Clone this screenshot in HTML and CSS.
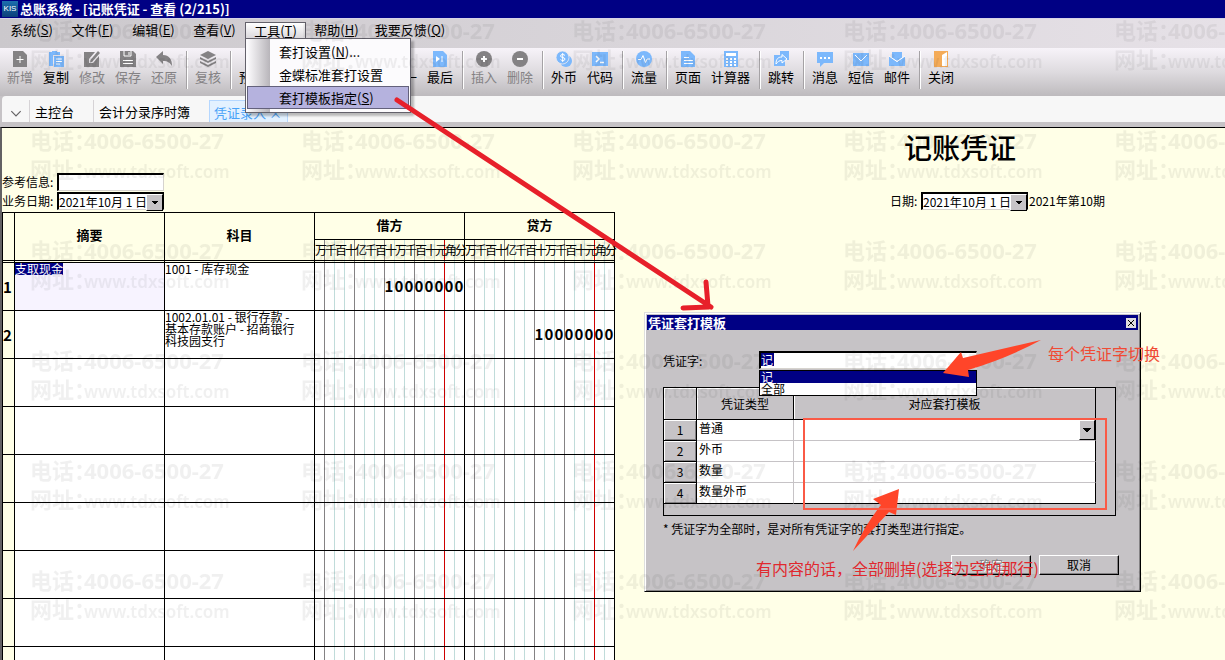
FILE: index.html
```html
<!DOCTYPE html>
<html lang="zh-CN">
<head>
    <meta charset="UTF-8">
    <meta name="viewport" content="width=device-width, initial-scale=1.0">
    <title>总账系统 - [记账凭证 - 查看 (2/215)]</title>
    <link rel="stylesheet" href="styles.css">
</head>
<body>
<div class="app">

    <header class="titlebar">
        <span class="logo">KIS</span>
        <h1>总账系统 - [记账凭证 - 查看 (2/215)]</h1>
    </header>

    <!-- Menu -->
    <nav class="menubar">
        <button>系统(<u>S</u>)</button>
        <button>文件(<u>F</u>)</button>
        <button>编辑(<u>E</u>)</button>
        <button>查看(<u>V</u>)</button>
        <div class="menu-open">
            <button class="active">工具(<u>T</u>)</button>
            <div class="menu-popup">
                <button>套打设置(<u>N</u>)...</button>
                <button>金蝶标准套打设置</button>
                <button class="selected">套打模板指定(<u>S</u>)</button>
            </div>
        </div>
        <button>帮助(<u>H</u>)</button>
        <button class="wide">我要反馈(<u>Q</u>)</button>
    </nav>

    <!-- Toolbar -->
    <div class="toolbar">
        <button class="off"><svg viewBox="0 0 16 16"><path d="M1 0h10l4 4v12H1z"/><path class="w" d="M8 5v7M4.500 8.500h7"/></svg>新增</button>
        <button><svg viewBox="0 0 16 16"><path d="M1 1h3V0h5v1h3v3H5v11H1z"/><path d="M6 5h10v11H6z"/><path class="w" d="M8 8h6M8 10.500h6M8 13h4"/></svg>复制</button>
        <button class="off"><svg viewBox="0 0 16 16"><path d="M0 1h11L5 8v4h4l6-7v11H0z"/><path d="M14 0l2 2-8 9-2 .5.5-2.500z"/></svg>修改</button>
        <button class="off"><svg viewBox="0 0 16 16"><path d="M0 0h13l3 3v13H0z"/><path class="w" d="M4 0v5h7V0M9 1v3M3 9.500h10M3 12.500h10"/></svg>保存</button>
        <button class="off"><svg viewBox="0 0 16 16"><path d="M0 6l7-6v4c6 0 9 4 9 11-2-3-4-5-9-5v3z"/></svg>还原</button>
        <hr>
        <button class="off"><svg viewBox="0 0 16 16"><path d="M8 0l8 4-8 4-8-4z"/><path d="M0 6l8 4 8-4v2l-8 4-8-4z"/><path d="M0 10l8 4 8-4v2l-8 4-8-4z"/></svg>复核</button>
        <hr>
        <button><svg viewBox="0 0 16 16"><path d="M1 0h14v16H1z"/></svg>预览</button>
        <button aria-label="打印"><svg viewBox="0 0 16 16"><path d="M0 4h16v8H0z"/></svg></button>
        <hr>
        <button aria-label="第一"><svg viewBox="0 0 16 16"><path d="M1 0h10l4 4v12H1z"/></svg></button>
        <button aria-label="上一"><svg viewBox="0 0 16 16"><path d="M1 0h10l4 4v12H1z"/></svg></button>
        <button><svg viewBox="0 0 16 16"><path d="M1 0h10l4 4v12H1z"/></svg>下一</button>
        <button><svg viewBox="0 0 16 16"><path d="M1 0h10l4 4v12H1z"/><path fill="#fff" stroke="none" d="M4 5l4 3-4 3z"/><path class="w" d="M10 5v6"/></svg>最后</button>
        <hr>
        <button class="off"><svg viewBox="0 0 16 16"><circle cx="8" cy="8" r="8"/><path class="w b" d="M8 5v6M5 8h6"/></svg>插入</button>
        <button class="off"><svg viewBox="0 0 16 16"><circle cx="8" cy="8" r="8"/><path class="w b" d="M5 8h6"/></svg>删除</button>
        <hr>
        <button><svg viewBox="0 0 16 16"><circle cx="10" cy="10" r="6"/><circle cx="6.500" cy="6.500" r="6.500" stroke="#eeebef" stroke-width=".8"/><path class="w" d="M9 4.500C8 3 4.500 3 4.500 5s4.500 1 4.500 3-3.500 2-4.500.5M6.700 2v9"/></svg>外币</button>
        <button><svg viewBox="0 0 16 16"><path d="M0 1h16v14H0z"/><path class="w" stroke-width="1.500" d="M4 5l3 3-3 3M8 11.500h4"/></svg>代码</button>
        <hr>
        <button><svg viewBox="0 0 16 16"><circle cx="8" cy="8" r="8"/><path class="w" d="M2 8.500h3l2-4 2.500 7L11 8h3"/></svg>流量</button>
        <hr>
        <button><svg viewBox="0 0 16 16"><path d="M1 0h9l5 5v11H1z"/><path class="w" d="M4 6.500h5M4 9.500h9M4 12.500h9"/></svg>页面</button>
        <button class="wide"><svg viewBox="0 0 16 16"><path d="M1 0h14v16H1z"/><path fill="#fff" d="M3 2h10v3H3z"/><path class="w b" stroke-dasharray="2 2" d="M3 8h10M3 11h10M3 14h10"/></svg>计算器</button>
        <hr>
        <button><svg viewBox="0 0 16 16"><path d="M1 4h11v11H1zM7 0h9v9H7z"/><path fill="#7cb8fc" stroke="#fff" d="M3 13c0-5 2-7 6-7V3.500L14 8l-5 4V9.500c-3 0-4 1-6 3.500z"/></svg>跳转</button>
        <hr>
        <button><svg viewBox="0 0 16 16"><path d="M0 1h16v11H7l-4 4v-4H0z"/><path class="w b" stroke-dasharray="2 2" d="M3 7h10"/></svg>消息</button>
        <button><svg viewBox="0 0 16 16"><path d="M0 2h16v13H0z"/><path class="w" d="M2 4l6 6 6-6"/></svg>短信</button>
        <button><svg viewBox="0 0 16 16"><path d="M3 1h10v6l-5 3-5-3z"/><path d="M0 5l8 6 8-6v10H0z"/><path class="w" d="M0 5l8 5.500L16 5"/></svg>邮件</button>
        <hr>
        <button><svg viewBox="0 0 16 16"><path fill="#f4ab58" d="M1 0h14v16H1z"/><path fill="#fff" d="M9 4l5-3v14H9z"/></svg>关闭</button>
    </div>

    <!-- Tabs -->
    <div class="tabs">
        <button class="tab-list" aria-label="窗口列表"><svg viewBox="0 0 10 6"><path d="M1 1l4 4 4-4"/></svg></button>
        <a href="#">主控台</a>
        <a href="#">会计分录序时簿</a>
        <a href="#" class="current">凭证录入 ×</a>
    </div>

    <!-- Voucher -->
    <main class="voucher">
        <h2>记账凭证</h2>
        <div class="fields">
            <div class="left-fields">
                <label for="ref">参考信息:</label>
                <input type="text" id="ref" class="sunken">
                <label for="bizDate">业务日期:</label>
                <span class="drop"><select id="bizDate" class="sunken"><option>2021年10月 1 日</option></select></span>
            </div>
            <div class="right-fields">
                <label for="date">日期:</label>
                <span class="drop"><select id="date" class="sunken"><option>2021年10月 1 日</option></select></span>
                <span>2021年第10期</span>
            </div>
        </div>

        <table class="ledger">
            <colgroup>
                <col class="c-num"><col class="c-text"><col class="c-text"><col class="c-text"><col class="c-text">
            </colgroup>
            <thead>
                <tr>
                    <th rowspan="2" class="last"></th>
                    <th rowspan="2" class="last">摘要</th>
                    <th rowspan="2" class="last">科目</th>
                    <th>借方</th>
                    <th>贷方</th>
                </tr>
                <tr>
                    <td class="money last"><div class="units"><span>万</span><span>千</span><span>百</span><span>十</span><span>亿</span><span>千</span><span>百</span><span>十</span><span>万</span><span>千</span><span>百</span><span>十</span><span>元</span><span>角</span><span>分</span></div></td>
                    <td class="money last"><div class="units"><span>万</span><span>千</span><span>百</span><span>十</span><span>亿</span><span>千</span><span>百</span><span>十</span><span>万</span><span>千</span><span>百</span><span>十</span><span>元</span><span>角</span><span>分</span></div></td>
                </tr>
            </thead>
            <tbody>
                <tr>
                    <th>1</th>
                    <td class="editing"><mark>支取现金</mark></td>
                    <td>1001 - 库存现金</td>
                    <td class="money"><div class="amount"><span>1</span><span>0</span><span>0</span><span>0</span><span>0</span><span>0</span><span>0</span><span>0</span></div></td>
                    <td class="money"></td>
                </tr>
                <tr>
                    <th>2</th>
                    <td></td>
                    <td>1002.01.01 - 银行存款 -<br>基本存款账户 - 招商银行<br>科技园支行</td>
                    <td class="money"></td>
                    <td class="money"><div class="amount"><span>1</span><span>0</span><span>0</span><span>0</span><span>0</span><span>0</span><span>0</span><span>0</span></div></td>
                </tr>
                <tr><th></th><td></td><td></td><td class="money"></td><td class="money"></td></tr>
                <tr><th></th><td></td><td></td><td class="money"></td><td class="money"></td></tr>
                <tr><th></th><td></td><td></td><td class="money"></td><td class="money"></td></tr>
                <tr><th></th><td></td><td></td><td class="money"></td><td class="money"></td></tr>
                <tr><th></th><td></td><td></td><td class="money"></td><td class="money"></td></tr>
                <tr><th></th><td></td><td></td><td class="money"></td><td class="money"></td></tr>
                <tr><th></th><td></td><td></td><td class="money"></td><td class="money"></td></tr>
            </tbody>
        </table>
    </main>

    <!-- Template dialog -->
    <section class="dialog">
        <header>
            <h3>凭证套打模板</h3>
            <button class="close" aria-label="关闭"><svg viewBox="0 0 8 8"><path d="M1 1l6 6M7 1L1 7"/></svg></button>
        </header>
        <div class="dialog-body">
            <div class="word-row">
                <label for="word">凭证字:</label>
                <div class="combo">
                    <div class="combo-box sunken"><input type="text" id="word" value="记"></div>
                    <ul>
                        <li class="selected">记</li>
                        <li>全部</li>
                    </ul>
                </div>
            </div>
            <div class="grid-box">
                <table class="templates">
                    <colgroup><col class="t-num"><col class="t-type"><col></colgroup>
                    <thead>
                        <tr><th></th><th>凭证类型</th><th>对应套打模板</th></tr>
                    </thead>
                    <tbody>
                        <tr><th>1</th><td>普通</td><td class="pick"><button class="arrow" aria-label="选择模板"></button></td></tr>
                        <tr><th>2</th><td>外币</td><td></td></tr>
                        <tr><th>3</th><td>数量</td><td></td></tr>
                        <tr><th>4</th><td>数量外币</td><td></td></tr>
                    </tbody>
                </table>
            </div>
            <p>* 凭证字为全部时，是对所有凭证字的套打类型进行指定。</p>
            <div class="actions">
                <button disabled>确定</button>
                <button>取消</button>
            </div>
        </div>
    </section>

    <!-- Watermark -->
    <svg class="overlay watermark">
        <defs>
            <pattern id="mark" width="271" height="110" patternUnits="userSpaceOnUse">
                <text x="30" y="39">电话：</text>
                <text x="84" y="39">4006-6500-27</text>
                <text x="30" y="68">网址：</text>
                <text x="84" y="68" class="site">www.tdxsoft.com</text>
            </pattern>
        </defs>
        <rect y="20" width="100%" height="100%" fill="url(#mark)"/>
    </svg>

    <!-- Notes -->
    <svg class="overlay notes">
        <path class="pen" d="M397 100L711 307M706 282l2 24M683 308l26-1"/>
        <path class="head" d="M1041 340L963 358l-2-6-18 21 26 4-1-7q40-12 73-30z"/>
        <path class="head" d="M899 489l-26 10 8 6q-16 20-28 46l36-39 7 3z"/>
        <rect x="804" y="419" width="302" height="90"/>
    </svg>
    <div class="note note-word">每个凭证字切换</div>
    <div class="note note-clear">有内容的话，全部删掉(选择为空的那行)</div>
</div>
</body>
</html>
```

FILE: styles.css
```css
* {
    box-sizing: border-box;
}
body {
    margin: 0;
    font-family: "Noto Sans CJK SC", sans-serif;
    font-size: 12px;
    color: #000;
}
button, input, select {
    font: inherit;
    color: inherit;
    margin: 0;
    padding: 0;
    border: none;
    border-radius: 0;
    background: none;
}
h1, h2, h3, p, ul {
    margin: 0;
    padding: 0;
}
.app {
    position: relative;
    display: flex;
    flex-direction: column;
    height: 100vh;
    overflow: hidden;
    background: #c6c3c6;
}

/* title bar */
.titlebar {
    display: flex;
    align-items: center;
    gap: 2px;
    height: 18px;
    padding-left: 2px;
    background: #000084;
    color: #fff;
}
.titlebar h1 {
    font-size: 13px;
    line-height: 18px;
}
.logo {
    width: 16px;
    height: 16px;
    background: linear-gradient(#1c6fae, #0b3f7a);
    font: 8px/16px "Liberation Sans", sans-serif;
    text-align: center;
}

/* menu */
.menubar {
    display: flex;
    height: 30px;
    padding: 2px 0 0 1px;
    border-top: 1px solid #d6d3e8;
    background: linear-gradient(90deg, #cbc8cc, #e6e1e7);
    font-size: 13px;
}
.menubar button {
    width: 61px;
    height: 18px;
    line-height: 16px;
    white-space: nowrap;
}
.menubar .wide {
    width: 86px;
}
.menu-open {
    position: relative;
    height: 18px;
}
.menubar .active {
    border: 1px solid #63616b;
    border-bottom: none;
    background: linear-gradient(#fff, #d6d3d8);
}
.menu-popup {
    position: absolute;
    z-index: 5;
    top: 17px;
    left: 0;
    width: 166px;
    padding: 1px 1px 3px;
    border: 1px solid #63616b;
    background: linear-gradient(90deg, #fdfcfe, #b8b5ba) 1px 0 / 23px 100% no-repeat #fcfbfd;
    box-shadow: 3px 3px 2px rgba(0, 0, 0, 0.25);
}
.menu-popup button {
    display: block;
    width: 100%;
    height: 23px;
    padding-left: 32px;
    line-height: 22px;
    text-align: left;
}
.menu-popup .selected {
    padding-left: 31px;
    border: 1px solid #63617b;
    background: #b5b2de;
    line-height: 20px;
}

/* toolbar */
.toolbar {
    display: flex;
    height: 48px;
    padding: 3px 0 0 2px;
    background: linear-gradient(#f7f3f9, #dedbdf 50%, #bdbabd);
    font-size: 13px;
}
.toolbar button {
    width: 36px;
    height: 38px;
    display: flex;
    flex-direction: column;
    align-items: center;
    gap: 1px;
    line-height: 18px;
    white-space: nowrap;
}
.toolbar .wide {
    width: 49px;
}
.toolbar .off {
    color: #848284;
}
.toolbar hr {
    width: 2px;
    height: 38px;
    margin: 0 2px 0 4px;
    border: none;
    border-left: 1px solid #a5a2a5;
    border-right: 1px solid #fff;
}
.toolbar svg {
    width: 16px;
    height: 16px;
    fill: #7cb8fc;
}
.toolbar .off svg {
    fill: #848284;
}
.toolbar .w {
    fill: none;
    stroke: #fff;
}
.toolbar .b {
    stroke-width: 2;
}

/* tabs */
.tabs {
    display: flex;
    align-items: flex-end;
    height: 26px;
    margin-left: 2px;
    border-top-left-radius: 4px;
    background: #f7f7f7;
    font-size: 13px;
}
.tab-list {
    width: 27px;
    height: 22px;
}
.tab-list svg {
    width: 12px;
    height: 7px;
    fill: none;
    stroke: #636163;
}
.tabs a {
    height: 22px;
    padding: 0 19px 0 5px;
    border-left: 1px solid #d6d3d6;
    color: #000;
    line-height: 24px;
    text-decoration: none;
}
.tabs .current {
    padding: 0 5px 0 4px;
    border: 1px solid #b5d7ff;
    border-bottom: none;
    background: #e3f1ff;
    color: #4aa2f7;
}

/* voucher */
.voucher {
    flex: 1;
    min-height: 0;
    margin-top: 5px;
    overflow: hidden;
    border-top: 1px solid #000;
    border-left: 2px solid #636163;
    background: #ffffe7;
}
.voucher h2 {
    height: 45px;
    padding-left: 902px;
    font-size: 28px;
    font-weight: 500;
    line-height: 38px;
    white-space: nowrap;
}
.fields {
    display: flex;
    align-items: flex-end;
    height: 39px;
    padding-bottom: 2px;
    white-space: nowrap;
}
.left-fields {
    display: grid;
    grid-template-columns: 55px 107px;
    row-gap: 1px;
    width: 888px;
    line-height: 18px;
}
.right-fields {
    display: grid;
    grid-template-columns: 30px 107px auto;
    column-gap: 1px;
    line-height: 18px;
}
.sunken {
    width: 100%;
    height: 18px;
    border: 1px solid #d6d3ce;
    border-top: 2px solid #000;
    border-left: 2px solid #000;
    background: #fff;
}
.drop {
    position: relative;
    display: block;
    height: 18px;
}
.drop select {
    display: block;
    appearance: none;
    border-right: 1px solid #000;
    line-height: 14px;
}
.drop::after {
    content: "";
    position: absolute;
    top: 2px;
    right: 1px;
    width: 15px;
    height: 15px;
    border: 1px solid #fff;
    border-right-color: #000;
    border-bottom-color: #000;
    background: conic-gradient(from 315deg at 50% 100%, #000 90deg, transparent 0) center / 6px 3px no-repeat #c6c3c6;
    pointer-events: none;
}

/* ledger */
.ledger {
    width: 613px;
    table-layout: fixed;
    border-collapse: separate;
    border-spacing: 0;
    border: 1px solid #000;
    border-width: 1px 0 0 1px;
    background: #fff;
}
.c-num {
    width: 12px;
}
.c-text {
    width: 150px;
}
.ledger th, .ledger td {
    padding: 0;
    border-right: 1px solid #000;
    border-bottom: 1px solid #000;
}
.ledger td {
    vertical-align: top;
    line-height: 12px;
    white-space: nowrap;
}
.ledger thead, .ledger th {
    background-color: #ffffe7;
}
.ledger thead th {
    height: 27px;
    padding-bottom: 3px;
    font-size: 13px;
    line-height: 16px;
}
.ledger thead td {
    height: 23px;
}
.ledger thead .last {
    border-bottom: 3px double #000;
}
.ledger tbody tr {
    height: 48px;
}
.ledger tbody th {
    padding-right: 2px;
    font-size: 15px;
    line-height: 20px;
}
.ledger .editing {
    background: #f7f3ff;
}
mark {
    display: inline-block;
    background: #000084;
    color: #fff;
}
.ledger .money {
    background-image:
        linear-gradient(#ce0000, #ce0000),
        linear-gradient(90deg, transparent 29px, #848284 29px),
        linear-gradient(90deg, transparent 9px, #c0dcda 9px);
    background-position: 129px 0, -20px 0, 0 0;
    background-size: 1px 100%, 30px 100%, 10px 100%;
    background-repeat: no-repeat, repeat, repeat;
}
.units {
    display: grid;
    grid-template-columns: repeat(15, 10px);
    width: 149px;
    line-height: 20px;
}
.amount {
    display: grid;
    grid-template-columns: repeat(8, 10px);
    justify-content: end;
    font-size: 15px;
    font-weight: bold;
    line-height: 46px;
    text-align: center;
}

/* dialog */
.dialog {
    position: absolute;
    top: 312px;
    left: 644px;
    width: 497px;
    padding: 2px;
    border: 1px solid #000;
    border-top-color: #dedfde;
    border-left-color: #dedfde;
    background: #c6c3c6;
    box-shadow: inset 1px 1px #fff, inset -1px -1px #848284;
}
.dialog header {
    display: flex;
    align-items: center;
    justify-content: space-between;
    height: 15px;
    padding: 0 2px 0 1px;
    background: #000084;
    color: #fff;
}
.dialog h3 {
    font-size: 13px;
    line-height: 15px;
}
.close {
    display: flex;
    align-items: center;
    justify-content: center;
    width: 10px;
    height: 10px;
    background: #dedbde;
}
.close svg {
    width: 8px;
    height: 8px;
    stroke: #000;
}
.dialog-body {
    padding: 21px 22px 14px 16px;
}
.word-row {
    display: flex;
    height: 36px;
}
.word-row label {
    width: 96px;
    line-height: 20px;
}
.combo {
    position: relative;
    width: 218px;
}
.combo-box input {
    display: block;
    width: 13px;
    height: 13px;
    background: #000084;
    color: #fff;
    line-height: 13px;
}
.combo ul {
    position: absolute;
    top: 19px;
    left: 0;
    z-index: 1;
    width: 100%;
    border: 1px solid #000;
    background: #fff;
    list-style: none;
}
.combo li {
    height: 12px;
    padding-left: 1px;
    line-height: 12px;
}
.combo .selected {
    background: #000084;
    color: #fff;
}
.grid-box {
    height: 129px;
    padding-right: 19px;
    border: 1px solid #000;
}
.templates {
    width: 100%;
    table-layout: fixed;
    border-collapse: separate;
    border-spacing: 0;
    line-height: 16px;
}
.t-num {
    width: 33px;
}
.t-type {
    width: 97px;
}
.templates th {
    padding: 0;
    border-right: 1px solid #000;
    border-bottom: 1px solid #000;
    background: #c6c3c6;
    box-shadow: inset 1px 1px #fff;
    font-weight: normal;
}
.templates thead th {
    height: 32px;
}
.templates tbody th {
    height: 21px;
    box-shadow: inset 1px 1px #fff, inset -1px -1px #848284;
}
.templates td {
    height: 21px;
    padding: 0 2px;
    border-right: 1px solid #c6c3c6;
    border-bottom: 1px solid #c6c3c6;
    background: #fff;
    vertical-align: top;
}
.templates td:last-child {
    border-right-color: #000;
}
.templates tr:last-child td {
    border-bottom-color: #000;
}
.templates .pick {
    padding: 0;
}
.arrow {
    display: block;
    width: 16px;
    height: 20px;
    margin-left: auto;
    border: 1px solid #fff;
    border-right-color: #000;
    border-bottom-color: #000;
    background: conic-gradient(from 315deg at 50% 100%, #000 90deg, transparent 0) center / 8px 4px no-repeat #c6c3c6;
}
.dialog p {
    padding: 4px 0 17px;
    line-height: 18px;
}
.actions {
    display: flex;
    justify-content: flex-end;
    gap: 8px;
    margin-right: -3px;
}
.actions button {
    width: 80px;
    height: 20px;
    border: 1px solid #fff;
    border-right-color: #000;
    border-bottom-color: #000;
    box-shadow: inset -1px -1px #848284;
    line-height: 16px;
}
.actions button:disabled {
    color: #848284;
    text-shadow: 1px 1px #fff;
}

/* watermark and notes */
.overlay {
    position: absolute;
    top: 0;
    left: 0;
    width: 100%;
    height: 100%;
    pointer-events: none;
}
.watermark {
    z-index: 6;
}
.watermark text {
    font-family: "Noto Sans", "Noto Sans CJK SC", sans-serif;
    font-size: 22px;
    font-weight: bold;
    fill: rgba(0, 0, 0, 0.06);
}
.watermark .site {
    font-size: 17px;
    font-weight: 600;
}
.notes {
    z-index: 7;
    fill: none;
}
.notes .pen {
    stroke: #e7202a;
    stroke-width: 5;
    stroke-linecap: round;
}
.notes .head {
    fill: #ff4529;
}
.notes rect {
    stroke: #fa5a46;
    stroke-width: 2;
}
.note {
    position: absolute;
    z-index: 8;
    font-size: 16px;
    line-height: 20px;
    white-space: nowrap;
    color: #e0282e;
}
.note-word {
    top: 343px;
    left: 1048px;
    color: #f04a34;
}
.note-clear {
    top: 558px;
    left: 756px;
}
```
